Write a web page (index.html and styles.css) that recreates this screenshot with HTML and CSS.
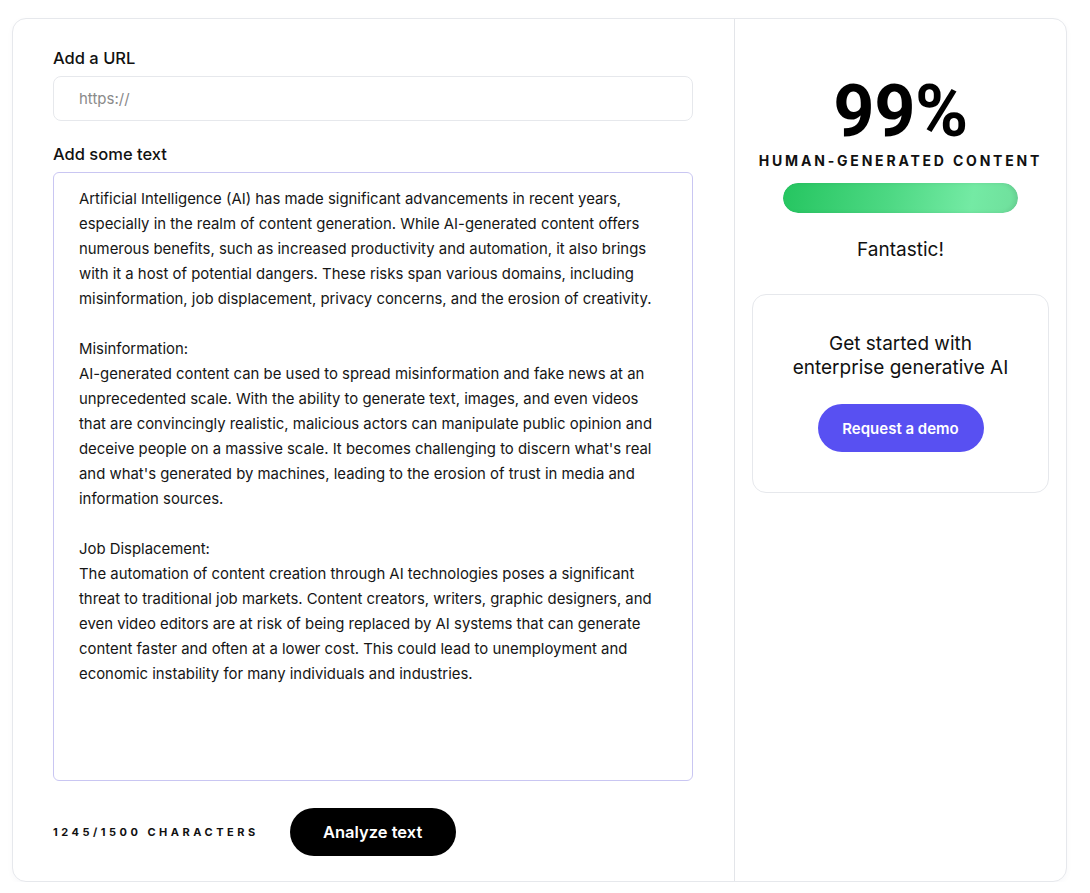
FILE: index.html
```html
<!DOCTYPE html>
<html lang="en">
<head>
<meta charset="utf-8">
<title>AI Content Detector</title>
<link rel="stylesheet" href="styles.css">
</head>
<body>
<main class="card">
  <section class="editor">
    <label class="label">Add a URL</label>
    <div class="input"><span class="placeholder">https://</span></div>
    <label class="label label-text">Add some text</label>
    <div class="textarea">Artificial Intelligence (AI) has made significant advancements in recent years,
especially in the realm of content generation. While AI-generated content offers
numerous benefits, such as increased productivity and automation, it also brings
with it a host of potential dangers. These risks span various domains, including
misinformation, job displacement, privacy concerns, and the erosion of creativity.

Misinformation:
AI-generated content can be used to spread misinformation and fake news at an
unprecedented scale. With the ability to generate text, images, and even videos
that are convincingly realistic, malicious actors can manipulate public opinion and
deceive people on a massive scale. It becomes challenging to discern what's real
and what's generated by machines, leading to the erosion of trust in media and
information sources.

Job Displacement:
The automation of content creation through AI technologies poses a significant
threat to traditional job markets. Content creators, writers, graphic designers, and
even video editors are at risk of being replaced by AI systems that can generate
content faster and often at a lower cost. This could lead to unemployment and
economic instability for many individuals and industries.</div>
    <div class="actions">
      <span class="count">1245/1500 Characters</span>
      <button class="btn btn-dark">Analyze text</button>
    </div>
  </section>
  <aside class="result">
    <div class="score">99%</div>
    <div class="score-label">Human-Generated Content</div>
    <div class="bar"><div class="bar-fill" style="width:100%"></div></div>
    <div class="verdict">Fantastic!</div>
    <div class="promo">
      <p class="promo-text">Get started with<br>enterprise generative AI</p>
      <button class="btn btn-primary">Request a demo</button>
    </div>
  </aside>
</main>
</body>
</html>
```

FILE: styles.css
```css
* { box-sizing: border-box; }
html, body { margin: 0; padding: 0; background: #fff; }
body {
  font-family: "Inter", "Noto Sans", "Liberation Sans", sans-serif;
  color: #111;
  padding: 18px 0 0 12px;
}
.card {
  width: 1055px;
  height: 864px;
  border: 1px solid #e6e8ec;
  border-radius: 14px;
  display: flex;
  background: #fff;
  box-shadow: 0 2px 6px rgba(30, 40, 90, 0.03);
  overflow: hidden;
}
.editor {
  width: 722px;
  border-right: 1px solid #e3e5e9;
  padding: 27px 40px 0 40px;
  display: flex;
  flex-direction: column;
}
.label {
  font-size: 16.5px;
  line-height: 24px;
  font-weight: 500;
  color: #111;
}
.label-text { margin-top: 21px; }
.input {
  margin-top: 6px;
  height: 45px;
  width: 640px;
  border: 1px solid #e6e8ec;
  border-radius: 8px;
  padding-left: 25px;
  display: flex;
  align-items: center;
}
.placeholder { color: #8a8a8a; font-size: 15px; }
.textarea {
  margin-top: 6px;
  width: 640px;
  height: 609px;
  border: 1px solid #c9c6f2;
  border-radius: 6px;
  padding: 14px 10px 0 25px;
  font-size: 14.9px;
  line-height: 25px;
  white-space: pre-line;
  color: #161616;
}
.actions {
  margin-top: 27px;
  display: flex;
  align-items: center;
  gap: 31px;
}
.count {
  font-size: 11px;
  font-weight: 700;
  letter-spacing: 3.5px;
  text-transform: uppercase;
  color: #111;
}
.btn {
  border: none;
  border-radius: 999px;
  width: 166px;
  height: 48px;
  font-family: inherit;
  font-weight: 600;
  color: #fff;
  cursor: pointer;
}
.btn-dark { background: #000; font-size: 16.5px; }
.btn-primary { background: #5850f2; font-size: 15px; }
.result {
  flex: 1;
  padding: 57px 17px 0 17px;
  display: flex;
  flex-direction: column;
  align-items: center;
}
.score {
  font-family: "Roboto", "Inter", sans-serif;
  font-size: 72px;
  line-height: 72px;
  font-weight: 700;
  letter-spacing: -0.5px;
  color: #000;
}
.score-label {
  margin-top: 3px;
  font-size: 14px;
  line-height: 20px;
  font-weight: 700;
  letter-spacing: 2.8px;
  text-transform: uppercase;
}
.bar {
  margin-top: 12px;
  width: 235px;
  height: 30px;
  border-radius: 15px;
  background: #eef0f3;
  overflow: hidden;
}
.bar-fill {
  height: 100%;
  border-radius: 15px;
  background: linear-gradient(100deg, #25c560 0%, #4dd883 45%, #74eaa4 80%, #6fdf9c 100%);
  box-shadow: inset -3px 0 4px rgba(0, 0, 0, 0.08);
}
.verdict {
  margin-top: 25px;
  font-size: 19px;
  line-height: 24px;
}
.promo {
  margin-top: 32px;
  width: 100%;
  height: 199px;
  border: 1px solid #e6e8ec;
  border-radius: 14px;
  padding-top: 37px;
  display: flex;
  flex-direction: column;
  align-items: center;
}
.promo-text {
  margin: 0;
  text-align: center;
  font-size: 19px;
  line-height: 24px;
}
.promo .btn { margin-top: 24px; }
```
